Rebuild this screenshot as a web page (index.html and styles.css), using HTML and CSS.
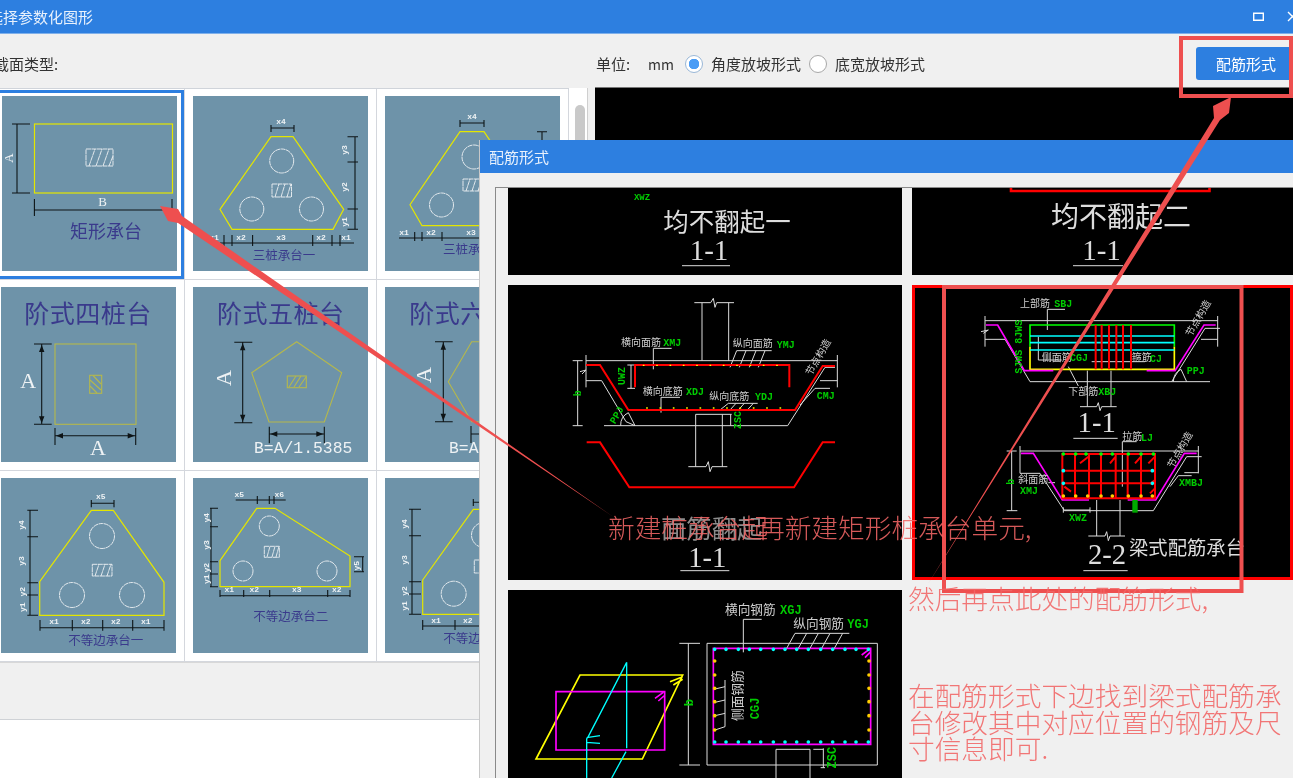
FILE: index.html
```html
<!DOCTYPE html>
<html lang="zh-CN">
<head>
<meta charset="utf-8">
<title>选择参数化图形</title>
<link rel="stylesheet" href="styles.css">
</head>
<body>
<div class="screen">
  <div class="window">
    <header class="titlebar">
      <span class="title-main">选择参数化图形</span>
      <svg class="win-max" viewBox="0 0 11 9"><path class="s-ui" d="M.7 1.2H10.3V8.3H.7Z"/></svg>
      <svg class="win-close" viewBox="0 0 11 11"><path class="s-ui" d="M1 1L10 10M10 1L1 10"/></svg>
    </header>
    <div class="toolbar">
      <span class="sec-label">截面类型:</span>
      <span class="unit-label">单位:</span>
      <span class="unit-value">mm</span>
      <span class="radio radio-on"></span><span class="radio-text">角度放坡形式</span>
      <span class="radio"></span><span class="radio-text">底宽放坡形式</span>
      <button class="btn-main">配筋形式</button>
    </div>
    <div class="main">
      <div class="gallery">
        <div class="cell cell-on">
          <svg class="th" viewBox="0 0 175 175">
            <rect class="yl" x="32.5" y="28" width="138" height="69"/>
            <path class="k" d="M10 28H28M10 97H28M15 28V97M32.4 103V120M170 103V120M32.4 114H162"/>
            <rect class="wh" x="84" y="53" width="27" height="17"/>
            <path class="wh" d="M87 70L93 53M94 70L100 53M101 70L107 53M107 70L111 60"/>
            <text class="lab ab" transform="rotate(-90 6.5 62)" x="6.5" y="66">A</text>
            <text class="lab ab" x="100.6" y="110">B</text>
            <text class="navy ctr t18" x="104" y="142">矩形承台</text>
          </svg>
        </div>
        <div class="cell">
          <svg class="th" viewBox="0 0 175 175">
            <path class="yl" d="M78 40.7H100L150.7 113.3L140 133.3H39L27 113.3Z"/>
            <circle class="wh" cx="88.7" cy="65" r="12"/><circle class="wh" cx="58.8" cy="113" r="12"/><circle class="wh" cx="118.5" cy="113" r="12"/>
            <rect class="wh" x="79" y="88" width="19.5" height="13"/>
            <path class="wh" d="M82 101L86 88M88 101L92 88M94 101L98 88"/>
            <path class="k" d="M78 32H101M78 29V36M154.5 40.7H165M154.5 66H165M154.5 113H165M154.5 133.3H165M162 40.7V133.3M27 147H161M31 139V150M39 139V150M59.6 139V150M119.7 139V150M139 139V150M147 139V150"/>
            <path class="k" d="M101 29V36"/>
            <text class="mini ctr" x="88" y="28">x4</text>
            <text class="mini ctr" transform="rotate(-90 154 54)" x="154" y="54">y3</text>
            <text class="mini ctr" transform="rotate(-90 154 91)" x="154" y="91">y2</text>
            <text class="mini ctr" transform="rotate(-90 154 126)" x="154" y="126">y1</text>
            <text class="mini ctr" x="21" y="144">x1</text><text class="mini ctr" x="48" y="144">x2</text><text class="mini ctr" x="88" y="144">x3</text><text class="mini ctr" x="128" y="144">x2</text><text class="mini ctr" x="153" y="144">x1</text>
            <text class="navy ctr t12" x="91" y="164">三桩承台一</text>
          </svg>
        </div>
        <div class="cell">
          <svg class="th" viewBox="0 0 175 175">
            <path class="yl" d="M75 35.7H99L148 108.7L137 129.7H37L25 108.7Z"/>
            <circle class="wh" cx="89" cy="61" r="12"/><circle class="wh" cx="56.5" cy="109" r="12"/>
            <rect class="wh" x="78" y="83" width="19" height="12"/>
            <path class="wh" d="M81 95L85 83M87 95L91 83M93 95L97 83"/>
            <path class="k" d="M75 27H99M75 24V31M99 24V31M152 35.7H162M157 35.7V120M14 142H160M29.7 136V145M37 136V145M57 136V145"/>
            <text class="mini ctr" x="87" y="23">x4</text>
            <text class="mini ctr" x="19" y="139">x1</text><text class="mini ctr" x="46" y="139">x2</text><text class="mini ctr" x="86" y="139">x3</text>
            <text class="navy t12" x="58" y="158">三桩承台二</text>
          </svg>
        </div>
        <div class="cell">
          <svg class="th" viewBox="0 0 175 175">
            <text class="navy ctr t25" x="87" y="36">阶式四桩台</text>
            <rect class="ol" x="54" y="57" width="81" height="80.3"/>
            <rect class="ol" x="88.7" y="88.3" width="12" height="18"/>
            <path class="ol" d="M89 93L100 103M89 99L96 106M92 88.5L100 97"/>
            <path class="k" d="M33 57H50.7M33 137.3H50.7M40.7 57V137M54 141V158M134.7 141V158M54 148.7H134.7"/>
            <path class="ar" d="M40.7 58L38 65H43.4ZM40.7 136.3L38 129.3H43.4ZM55 148.7L62 146V151.4ZM133.7 148.7L126.7 146V151.4Z"/>
            <text class="lab-a ctr" x="27.3" y="101">A</text>
            <text class="lab-a ctr" x="97" y="168">A</text>
          </svg>
        </div>
        <div class="cell">
          <svg class="th" viewBox="0 0 175 175">
            <text class="navy ctr t25" x="87.7" y="36">阶式五桩台</text>
            <path class="ol" d="M103.7 54.7L148.7 85.7L131.3 135H76L58.7 85.7Z"/>
            <rect class="ol" x="94.3" y="89" width="19" height="11.7"/>
            <path class="ol" d="M96 100L103 89M101 100L108 89M106 100L113 90"/>
            <path class="k" d="M41.3 55.3H59.3M41.3 135.7H59.3M49.7 55.3V135.7M76.3 139.7V156.3M131.3 139.7V156.3M76.3 147H131.3"/>
            <path class="ar" d="M49.7 56.3L47 63.3H52.4ZM49.7 134.7L47 127.7H52.4ZM77.3 147L84.3 144.3V149.7ZM130.3 147L123.3 144.3V149.7Z"/>
            <text class="lab-a ctr" transform="rotate(-90 31 91)" x="31" y="98">A</text>
            <text class="lab-m" x="61" y="166">B=A/1.5385</text>
          </svg>
        </div>
        <div class="cell">
          <svg class="th" viewBox="0 0 175 175">
            <text class="navy ctr t25" x="88" y="36">阶式六桩台</text>
            <path class="ol" d="M86.7 54.7H132L155 94.7L132 134.7H86.7L63.3 94.7Z"/>
            <path class="k" d="M50 54.7H67.7M50 134.7H67.7M58.3 54.7V134.7M86 139V156M86 147H132"/>
            <path class="ar" d="M58.3 55.7L55.6 62.7H61ZM58.3 133.7L55.6 126.7H61Z"/>
            <text class="lab-a ctr" transform="rotate(-90 38.7 88)" x="38.7" y="95">A</text>
            <text class="lab-m" x="64" y="166">B=A/1.5385</text>
          </svg>
        </div>
        <div class="cell">
          <svg class="th" viewBox="0 0 175 175">
            <path class="yl" d="M38.7 103.7L90.3 32.3H112.3L163 104.3V137.3H38.7Z"/>
            <circle class="wh" cx="101" cy="58" r="12.5"/><circle class="wh" cx="71" cy="117" r="12.5"/><circle class="wh" cx="131" cy="117" r="12.5"/>
            <rect class="wh" x="91.3" y="86.3" width="19.7" height="11.7"/>
            <path class="wh" d="M94 98L98 86.3M100 98L104 86.3M106 98L110 86.3"/>
            <path class="k" d="M90.3 25.3H113M90.3 22V29.3M113 22V29.3M26.3 32.3H37M26.3 58.7H37M26.3 104.7H37M26.3 117H37M26.3 137.3H37M29 32.3V137.3M39 149.7H163M39 142V152.7M71.3 142V152.7M101.7 142V152.7M131.7 142V152.7M163 142V152.7"/>
            <text class="mini ctr" x="99.7" y="21">x5</text>
            <text class="mini ctr" transform="rotate(-90 21.3 47)" x="21.3" y="49">y4</text>
            <text class="mini ctr" transform="rotate(-90 21.3 83)" x="21.3" y="85">y3</text>
            <text class="mini ctr" transform="rotate(-90 21.3 113.7)" x="21.3" y="116">y2</text>
            <text class="mini ctr" transform="rotate(-90 21.3 129.3)" x="21.3" y="132">y1</text>
            <text class="mini ctr" x="53" y="146">x1</text><text class="mini ctr" x="84.7" y="146">x2</text><text class="mini ctr" x="114.7" y="146">x2</text><text class="mini ctr" x="144.7" y="146">x1</text>
            <text class="navy ctr t12" x="104.7" y="167">不等边承台一</text>
          </svg>
        </div>
        <div class="cell">
          <svg class="th" viewBox="0 0 175 175">
            <path class="yl" d="M27 82.7L63.7 30.3H82L157 78V108.7H27Z"/>
            <circle class="wh" cx="76.3" cy="48" r="10"/><circle class="wh" cx="50" cy="93" r="10"/><circle class="wh" cx="134" cy="93" r="10"/>
            <rect class="wh" x="71.3" y="68.3" width="15" height="11"/>
            <path class="wh" d="M74 79L77 68.3M79 79L82 68.3M83 79L86 68.3"/>
            <path class="k" d="M42.7 22H92.7M64.3 18V26M76.3 18V26M81 18V26M17 30.3H25M17 48.7H25M17 83.7H25M17 96H25M17 108.7H25M18 30.3V108.7M161 78.7H171M161 93.7H171M169.7 78.7V93.7M27 117.7H157M27 112V119M50.7 112V119M76.7 112V119M134.7 112V119M157 112V119"/>
            <text class="mini ctr" x="46.3" y="19">x5</text><text class="mini ctr" x="86.3" y="19">x6</text>
            <text class="mini ctr" transform="rotate(-90 13.7 39.7)" x="13.7" y="42">y4</text>
            <text class="mini ctr" transform="rotate(-90 13.7 67)" x="13.7" y="69">y3</text>
            <text class="mini ctr" transform="rotate(-90 13.7 89.7)" x="13.7" y="92">y2</text>
            <text class="mini ctr" transform="rotate(-90 13.7 101.3)" x="13.7" y="104">y1</text>
            <text class="mini ctr" transform="rotate(-90 164 87.7)" x="164" y="90">y5</text>
            <text class="mini ctr" x="36.3" y="114">x1</text><text class="mini ctr" x="61.3" y="114">x2</text><text class="mini ctr" x="103.7" y="114">x3</text><text class="mini ctr" x="143.7" y="114">x2</text>
            <text class="navy ctr t12" x="97.7" y="143">不等边承台二</text>
          </svg>
        </div>
        <div class="cell">
          <svg class="th" viewBox="0 0 175 175">
            <path class="yl" d="M37.7 102L88.3 31.3H110L162 102V136.3H37.7Z"/>
            <circle class="wh" cx="99" cy="57" r="12.5"/><circle class="wh" cx="68.7" cy="115.7" r="12.5"/>
            <rect class="wh" x="89.3" y="82" width="20" height="13"/>
            <path class="k" d="M88.3 24.3H112M88.3 21V28M24 31.3H36M24 57.7H36M24 103.7H36M24 116H36M24 136.3H36M27 31.3V136.3M37.7 148H162M37.7 142V152M70 142V152"/>
            <text class="mini ctr" transform="rotate(-90 20 46)" x="20" y="48">y4</text>
            <text class="mini ctr" transform="rotate(-90 20 82)" x="20" y="84">y3</text>
            <text class="mini ctr" transform="rotate(-90 20 113)" x="20" y="115">y2</text>
            <text class="mini ctr" transform="rotate(-90 20 128)" x="20" y="130">y1</text>
            <text class="mini ctr" x="51" y="145">x1</text><text class="mini ctr" x="82.7" y="145">x2</text>
            <text class="navy t12" x="58.3" y="165">不等边承台三</text>
          </svg>
        </div>
      </div>
      <div class="scrollbar"><div class="scroll-thumb"></div></div>
      <div class="preview"></div>
    </div>
    <div class="footer"></div>
    <div class="blank"></div>
  </div>

  <section class="dialog">
    <header class="dlg-title">配筋形式</header>
    <div class="dlg-frame">
      <div class="dlg-grid">
        <div class="pic">
          <svg class="cad" viewBox="0 0 394 87">
            <text class="cg-s ctr" x="134" y="12">XWZ</text>
            <text class="cw-l ctr" x="219" y="43">均不翻起一</text>
            <text class="cw-n ctr" x="201" y="72">1-1</text>
            <path class="s1" d="M174 77.7H222"/>
          </svg>
        </div>
        <div class="pic">
          <svg class="cad" viewBox="0 0 381 87">
            <path class="sr1" d="M99 0V3H297.5V0"/>
            <text class="cw-xl ctr" x="209" y="39">均不翻起二</text>
            <text class="cw-n ctr" x="189.5" y="72">1-1</text>
            <path class="s1" d="M161 77.7H211"/>
          </svg>
        </div>
        <div class="pic">
          <svg class="cad" viewBox="24 15 1182 885">
            <path class="sw" d="M583 68H632L640 55L645 82L650 68H702M606 68V242M686 68V242M258 242H1012M258 225V322M1012 225V322M240 275L258 270L246 282M258 302H305L378 425L405 437M312 437H863L975 262H1005M960 302H1012M218 242H248M218 437H248M233 242V437M382 255H405M382 325H405M393 255V325M460 268V205H515M690 262L710 212H815M718 262L738 212M748 262L768 212M775 262L795 212M483 398V352H540M660 390L685 370H773M690 390L708 370M715 390L733 370M742 390L760 370M362 437A42 42 0 0 1 385 398L405 437M587 403V560M667 403V560M587 403H695M565 560H618L625 545L630 575L636 560H682M692 403V437M900 375L945 325H990"/>
            <path class="sr" d="M405 322V255H868V322M258 255H300L385 390H885L968 258H1005M260 487H300L388 622H882L968 487H1005"/>
            <path class="dots-y" d="M430 256H432M470 256H472M510 256H512M550 256H552M590 256H592M630 256H632M670 256H672M710 256H712M750 256H752M790 256H792M830 256H832M440 384H442M480 384H482M520 384H522M560 384H562M600 384H602M640 384H642M680 384H682M720 384H722M760 384H762M800 384H802M840 384H842"/>
            <text class="cw-t" x="363" y="198">横向面筋</text><text class="cg-t" x="490" y="199">XMJ</text>
            <text class="cw-t" x="698" y="200">纵向面筋</text><text class="cg-t" x="830" y="203">YMJ</text>
            <text class="cw-t" x="428" y="345">横向底筋</text><text class="cg-t" x="558" y="346">XDJ</text>
            <text class="cw-t" x="628" y="360">纵向底筋</text><text class="cg-t" x="765" y="360">YDJ</text>
            <text class="cg-t" x="950" y="357">CMJ</text>
            <text class="cg-t ctr" transform="rotate(-90 366 288)" x="366" y="298">UWZ</text>
            <text class="cg-t ctr" transform="rotate(-90 232 340)" x="232" y="350">b</text>
            <text class="cg-t ctr" transform="rotate(-60 350 405)" x="350" y="415">PPJ</text>
            <text class="cg-t ctr" transform="rotate(-90 712 420)" x="712" y="430">ZSC</text>
            <text class="cw-t ctr" transform="rotate(-60 955 232)" x="955" y="242">节点构造</text>
            <text class="cw-dim ctr" x="635" y="775">面筋翻起</text>
            <text class="cw-n3 ctr" x="622" y="860">1-1</text>
            <path class="sw" d="M541 872H688"/>
          </svg>
        </div>
        <div class="pic pic-on">
          <svg class="cad" viewBox="21 15 1143 885">
            <path class="sw" d="M240 122H938M240 108V200M938 108V200M228 155L250 150L235 160M240 178H300L375 305H915M800 305L900 145H945M888 178H938M427 150V88H480M400 170V240H470M560 245H720M490 260L520 318M547 272V380M618 272V380M525 380H575L580 368L585 392L590 380H635M805 305A42 42 0 0 1 828 268L845 305M345 513H880M345 498V580M880 498V580M305 513H335M305 692H337M320 513V692M652 620V485H695M430 608H450M475 690H555M475 682V698M555 682V698M345 580H405L478 692H745L845 530H890M838 578H880M795 620L820 587H860M575 660V768M645 660V768M550 768H600L605 755L610 782L615 768H660"/>
            <path class="sgr" d="M375 200V135H808V200"/>
            <path class="syl" d="M375 200V268H808V200"/>
            <path class="scy" d="M375 168H808M375 188H808M375 210H808"/>
            <path class="sr" d="M572 135V268M590 135V268M612 135V268M634 135V268M654 135V268M678 135V268"/>
            <path class="smg" d="M243 135H278L358 272H445M725 272H810L897 135H932M348 520H385L472 660H552M668 660H752L838 520H875"/>
            <path class="sr5" d="M472 522H750V655H472ZM510 522V655M552 522V655M588 522V655M632 522V655M668 522V655M708 522V655M472 572H750M472 610H750M525 550L550 530M615 550L632 530M690 550L708 530M730 550L750 530M478 620L498 635M735 612L750 600M735 640L750 625"/>
            <path class="dot-g" d="M475 522h.1M512 522h.1M543 522h.1M588 522h.1M622 522h.1M670 522h.1M708 522h.1M745 522h.1"/>
            <path class="dot-c" d="M475 572h.1M475 610h.1M742 572h.1M742 610h.1"/>
            <path class="dot-y" d="M475 648h.1M512 648h.1M548 648h.1M588 648h.1M622 648h.1M670 648h.1M708 648h.1M742 648h.1"/>
            <rect class="fill-g" x="682" y="660" width="16" height="38"/>
            <text class="cw-t" x="345" y="80">上部筋</text><text class="cg-t" x="448" y="80">SBJ</text>
            <text class="cw-t" x="410" y="242">侧面筋</text><text class="cg-t" x="495" y="242">CGJ</text>
            <text class="cw-t" x="680" y="242">箍筋</text><text class="cg-t" x="735" y="245">CJ</text>
            <text class="cw-t" x="490" y="345">下部筋</text><text class="cg-t" x="580" y="345">XBJ</text>
            <text class="cg-t" x="845" y="282">PPJ</text>
            <text class="cg-t ctr" transform="rotate(-90 342 200)" x="342" y="210">SJWS 8JWS</text>
            <text class="cw-t ctr" transform="rotate(-60 880 115)" x="880" y="125">节点构造</text>
            <text class="cw-t" x="652" y="480">拉筋</text><text class="cg-t" x="708" y="482">LJ</text>
            <text class="cw-t" x="340" y="610">斜面筋</text><text class="cg-t" x="345" y="643">XMJ</text>
            <text class="cg-t" x="822" y="617">XMBJ</text>
            <text class="cg-t" x="492" y="722">XWZ</text>
            <text class="cg-t ctr" transform="rotate(-90 318 605)" x="318" y="615">b</text>
            <text class="cw-t ctr" transform="rotate(-60 825 510)" x="825" y="520">节点构造</text>
            <text class="cw-n3 ctr" x="575" y="456">1-1</text>
            <path class="sw" d="M505 475H638"/>
            <text class="cw-n3 ctr" x="606" y="853">2-2</text>
            <path class="sw" d="M535 872H668"/>
            <text class="cw-big" x="672" y="826">梁式配筋承台</text>
          </svg>
        </div>
        <div class="pic">
          <svg class="cad" viewBox="24 15 1182 564">
            <path class="syl" d="M240 270H548L427 522H108ZM510 290L548 275M520 300L548 283"/>
            <path class="smg" d="M168 320H494V495H168ZM465 340L490 322M475 348L495 330M640 190H1112V478H640ZM1085 210L1112 190M1095 218L1112 200"/>
            <path class="scy2" d="M380 232V490M380 232L262 460M260 460V579M260 458L300 452M260 472L300 475M378 500L335 579"/>
            <path class="sw" d="M621 175H1132V540H621ZM538 175H600M538 540H600M565 175V540M730 202V103H785M885 145H1048M860 190L885 145M895 190L920 145M930 190L955 145M965 190L990 145M1003 190L1028 145M675 285V425L645 435M645 312L675 305M645 352L675 345M645 392L675 385M828 579V493H930V579M940 493H970M970 490V548M962 548H975"/>
            <path class="dot-c" d="M644 193h.1M678 193h.1M715 193h.1M748 193h.1M782 193h.1M820 193h.1M855 193h.1M890 193h.1M925 193h.1M962 193h.1M998 193h.1M1035 193h.1M1068 193h.1M1105 193h.1M644 471h.1M678 471h.1M715 471h.1M748 471h.1M782 471h.1M820 471h.1M855 471h.1M890 471h.1M925 471h.1M962 471h.1M998 471h.1M1035 471h.1M1068 471h.1M1105 471h.1"/>
            <path class="dot-y" d="M644 228h.1M644 270h.1M644 310h.1M644 350h.1M644 392h.1M644 435h.1M1107 228h.1M1107 270h.1M1107 310h.1M1107 350h.1M1107 392h.1M1107 435h.1"/>
            <text class="cw-m" x="675" y="88">横向钢筋</text><text class="cg-m" x="840" y="88">XGJ</text>
            <text class="cw-m" x="880" y="128">纵向钢筋</text><text class="cg-m" x="1042" y="130">YGJ</text>
            <text class="cg-m ctr" transform="rotate(-90 567 353)" x="567" y="365">b</text>
            <text class="cw-m ctr" transform="rotate(-90 712 332)" x="712" y="345">侧面钢筋</text>
            <text class="cg-m ctr" transform="rotate(-90 765 370)" x="765" y="382">CGJ</text>
            <text class="cg-m ctr" transform="rotate(-90 997 518)" x="997" y="530">ZSC</text>
          </svg>
        </div>
      </div>
    </div>
  </section>

  <svg class="marks" viewBox="0 0 1293 778">
    <rect class="mark-box" x="1181" y="38" width="110" height="58"/>
    <rect class="mark-box" x="944" y="287" width="297.5" height="304"/>
    <path class="mark-fill" d="M160 206L178 209L182 216L612 516L178 223L168 221Z"/>
    <path class="mark-fill" d="M1231 97L1229 113L1220 120L928 584L1214 118L1213 106Z"/>
  </svg>
  <div class="note note-a">新建桩承台起</div>
  <div class="note note-b">再新建矩形桩承台单元,</div>
  <div class="note note-c">然后再点此处的配筋形式,</div>
  <div class="note note-d">在配筋形式下边找到梁式配筋承台修改其中对应位置的钢筋及尺寸信息即可.</div>
</div>
</body>
</html>
```

FILE: styles.css
```css
* { box-sizing: border-box; }
html, body { margin: 0; padding: 0; }
body { font-family: "Noto Sans CJK SC", "Liberation Sans", sans-serif; color: #333; background: #fff; }

.screen { position: relative; width: 1293px; height: 778px; overflow: hidden; }
.window { display: flex; flex-direction: column; width: 100%; height: 100%; background: #f0f0f0; filter: blur(.35px); }

.titlebar { display: flex; align-items: center; height: 34px; flex: none; background: #2d7fe0; border-bottom: 1px solid #7fb0ea; color: #e8f1fc; }
.title-main { margin-left: -12px; font-size: 15px; }
.win-max { width: 11px; height: 9px; margin-left: auto; }
.win-close { width: 11px; height: 11px; margin: 0 -5px 0 23px; }
.s-ui { fill: none; stroke: #fff; stroke-width: 1.4; }

.toolbar { display: flex; align-items: center; height: 54px; flex: none; padding-top: 5px; font-size: 15px; }
.sec-label { width: 602px; margin-left: -6px; flex: none; }
.unit-label { width: 36px; flex: none; }
.unit-value { width: 37px; margin-left: 16px; flex: none; font-size: 14px; }
.radio { width: 18px; height: 18px; flex: none; border: 1px solid #a8a8a8; border-radius: 50%; background: #fff; }
.radio-on { background: radial-gradient(circle, #4a9cf5 0 5px, #fff 5.5px); border-color: #9ab8d8; }
.radio-text { width: 90px; margin: 0 8px 0 8px; flex: none; white-space: nowrap; }
.btn-main { width: 100px; height: 33px; margin: 0 -3px 0 auto; padding: 0; flex: none; border: 0; border-radius: 3px; background: #2d7fe0; color: #fff; font: 15px "Noto Sans CJK SC", sans-serif; }

.main { display: flex; height: 574px; flex: none; }
.gallery { display: grid; grid-template-columns: repeat(3, 192px); grid-auto-rows: 191px; width: 576px; margin-left: -7px; flex: none; background: #fff; border-top: 1px solid #d0d4da; }
.cell { padding: 7px 0 0 8px; border-right: 1.5px solid #d4d7dd; border-bottom: 1.5px solid #d4d7dd; }
.cell-on { outline: 3px solid #2d7fe0; outline-offset: -4px; padding-left: 9px; }
.scrollbar { width: 19px; flex: none; padding: 17px 0 0 6px; background: #fff; border-right: 1px solid #cfcfcf; }
.scroll-thumb { width: 10px; height: 110px; border-radius: 5px; background: #c9c9c9; }
.preview { margin: -1px 0 0 7px; flex: 1; background: #000; border-top: 1px solid #777; }
.footer { height: 58px; flex: none; background: #f0f0f0; border-bottom: 1px solid #cfd2d6; border-top: 1px solid #d8d8d8; }
.blank { flex: 1; background: #fff; }

.th { display: block; width: 175px; height: 175px; background: #6e93a9; }
.th text { stroke: none; }
.yl, .ol, .wh, .k { fill: none; }
.yl { stroke: #e4e600; stroke-width: 1.2; }
.ol { stroke: #b5b84c; stroke-width: 1.1; }
.wh { stroke: #eef2f4; stroke-width: .9; stroke-dasharray: 5 .5; }
.k { stroke: #0e1416; stroke-width: 1.1; }
.ar { fill: #0e1416; }
.ctr { text-anchor: middle; }
.navy { fill: #3a3a8c; font-family: "Noto Sans CJK SC", sans-serif; }
.t12 { font-size: 12.5px; }
.t18 { font-size: 18px; }
.t25 { font-size: 25px; letter-spacing: .5px; }
.lab { fill: #eef2f4; font: 13px "Liberation Serif", serif; }
.ab { text-anchor: middle; }
.mini { fill: #eef2f4; font: bold 8px "Liberation Mono", monospace; }
.lab-a { fill: #eef2f4; font: 22px "Liberation Serif", serif; }
.lab-m { fill: #eef2f4; font: 16.4px "Liberation Mono", monospace; }

.dialog { position: absolute; left: 479px; top: 140px; right: 0; bottom: 0; background: #f0f0f0; border-left: 1px solid #c8c8c8; overflow: hidden; filter: blur(.35px); }
.dlg-title { height: 33px; padding-left: 9px; background: #2d7fe0; color: #e8f1fc; font-size: 15px; line-height: 34px; }
.dlg-frame { margin: 14px 0 0 15px; padding: 0 0 0 12px; border-left: 1px solid #8a8a8a; border-top: 1px solid #8a8a8a; }
.dlg-grid { display: grid; grid-template-columns: 394px 381px; grid-template-rows: 87px 295px 188px; gap: 10px; }
.pic { position: relative; background: #000; overflow: hidden; }
.pic:last-child { grid-column: 1; }
.pic-on { outline: 3px solid #f00; outline-offset: -3px; }
.cad { display: block; width: 100%; height: 100%; fill: none; }

.s1, .sw { fill: none; stroke: #dcdcdc; }
.s1 { stroke-width: 1; }
.sw { stroke-width: 3; }
.sr { fill: none; stroke: #f00; stroke-width: 6; }
.sr1 { fill: none; stroke: #f00; stroke-width: 2.6; }
.sr5 { fill: none; stroke: #f00; stroke-width: 6; }
.smg { fill: none; stroke: #f0f; stroke-width: 5; }
.sgr { fill: none; stroke: #0f0; stroke-width: 5; }
.syl { fill: none; stroke: #ff0; stroke-width: 5; }
.scy { fill: none; stroke: #0ff; stroke-width: 5; }
.scy2 { fill: none; stroke: #0ff; stroke-width: 4; }
.dots-y { fill: none; stroke: #ff0; stroke-width: 4; stroke-linecap: round; }
.dot-g, .dot-c, .dot-y { fill: none; stroke-width: 11; stroke-linecap: round; }
.dot-g { stroke: #0f0; }
.dot-c { stroke: #0ff; }
.dot-y { stroke: #fc0; }
.fill-g { fill: #0a0; }

.cw-l { fill: #ddd; font: 25.5px "Noto Sans CJK SC", sans-serif; }
.cw-xl { fill: #ddd; font: 28px "Noto Sans CJK SC", sans-serif; }
.cw-n { fill: #ddd; font: 29px "Liberation Serif", serif; }
.cw-n3 { fill: #ddd; font: 86px "Liberation Serif", serif; }
.cw-t { fill: #cfcfcf; font: 30px "Noto Sans CJK SC", sans-serif; }
.cw-m { fill: #cfcfcf; font: 38px "Noto Sans CJK SC", sans-serif; }
.cw-big { fill: #ddd; font: 58px "Noto Sans CJK SC", sans-serif; }
.cw-dim { fill: #8c8c8c; font: 76px "Noto Sans CJK SC", sans-serif; }
.cg-t { fill: #0c0; font: bold 30px "Liberation Mono", monospace; }
.cg-m { fill: #0c0; font: bold 36px "Liberation Mono", monospace; }
.cg-s { fill: #0c0; font: bold 9px "Liberation Mono", monospace; }

.marks { position: absolute; left: 0; top: 0; width: 1293px; height: 778px; pointer-events: none; }
.mark-box { fill: none; stroke: #ee4f4f; stroke-width: 4; }
.mark-fill { fill: #ee4f4f; }

.note { position: absolute; color: #f26666; font-size: 26.7px; font-weight: 300; line-height: 26.7px; white-space: nowrap; opacity: .88; }
.note-a { left: 608px; top: 514px; }
.note-b { left: 758px; top: 514px; }
.note-c { left: 908px; top: 585px; }
.note-d { left: 908px; top: 682px; width: 378px; white-space: normal; }
```
